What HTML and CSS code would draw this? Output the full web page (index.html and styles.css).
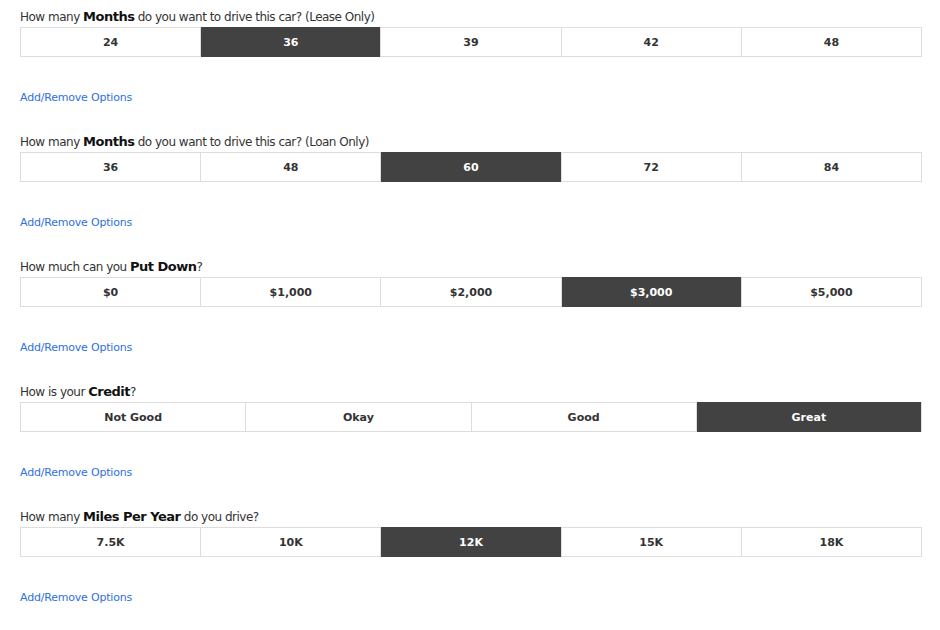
FILE: index.html
```html
<!DOCTYPE html>
<html lang="en">
<head>
  <meta charset="UTF-8" />
  <title>Deal Options</title>
  <link rel="stylesheet" href="styles.css">
</head>
<body>
  <div class="options">
    <section class="question">
      <p class="label">How many <b>Months</b> do you want to drive this car? (Lease Only)</p>
      <div class="choices">
        <button>24</button>
        <button class="active">36</button>
        <button>39</button>
        <button>42</button>
        <button>48</button>
      </div>
      <a href="#" class="edit-link">Add/Remove Options</a>
    </section>

    <section class="question">
      <p class="label">How many <b>Months</b> do you want to drive this car? (Loan Only)</p>
      <div class="choices">
        <button>36</button>
        <button>48</button>
        <button class="active">60</button>
        <button>72</button>
        <button>84</button>
      </div>
      <a href="#" class="edit-link">Add/Remove Options</a>
    </section>

    <section class="question">
      <p class="label">How much can you <b>Put Down</b>?</p>
      <div class="choices">
        <button>$0</button>
        <button>$1,000</button>
        <button>$2,000</button>
        <button class="active">$3,000</button>
        <button>$5,000</button>
      </div>
      <a href="#" class="edit-link">Add/Remove Options</a>
    </section>

    <section class="question">
      <p class="label">How is your <b>Credit</b>?</p>
      <div class="choices">
        <button>Not Good</button>
        <button>Okay</button>
        <button>Good</button>
        <button class="active">Great</button>
      </div>
      <a href="#" class="edit-link">Add/Remove Options</a>
    </section>

    <section class="question">
      <p class="label">How many <b>Miles Per Year</b> do you drive?</p>
      <div class="choices">
        <button>7.5K</button>
        <button>10K</button>
        <button class="active">12K</button>
        <button>15K</button>
        <button>18K</button>
      </div>
      <a href="#" class="edit-link">Add/Remove Options</a>
    </section>
  </div>
</body>
</html>
```

FILE: styles.css
```css
body {
  margin: 0;
  background: #fff;
  font-family: "DejaVu Sans", "Open Sans", sans-serif;
  color: #333;
}
.options {
  padding: 8px 18px 0 20px;
}
.question {
  height: 125px;
}
.label {
  margin: 0;
  font-size: 12px;
  line-height: 17px;
  color: #333;
  letter-spacing: -0.5px;
}
.label b {
  color: #111;
  font-size: 13px;
  font-weight: 700;
}
.choices {
  display: flex;
  margin-top: 1px;
  border: 1px solid #ddd;
  height: 28px;
}
.choices button {
  flex: 1 1 0;
  border: none;
  border-left: 1px solid #ddd;
  background: #fff;
  font-family: inherit;
  font-size: 11px;
  font-weight: 700;
  color: #333;
  padding: 0;
  cursor: pointer;
}
.choices button:first-child {
  border-left: none;
}
.choices button.active {
  background: #424242;
  color: #fff;
  margin: -1px 0;
}
.edit-link {
  display: inline-block;
  margin-top: 34px;
  font-size: 11px;
  color: #2f6fe0;
  text-decoration: none;
  letter-spacing: -0.2px;
}
```
